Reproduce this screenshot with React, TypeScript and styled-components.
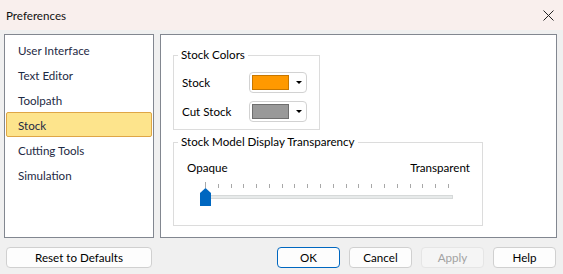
import React from "react";
import styled, { createGlobalStyle, css } from "styled-components";

const GlobalStyle = createGlobalStyle`
  html, body { margin: 0; padding: 0; }
  body {
    background: #f0f0f0;
    font-family: Lato, "Noto Sans", sans-serif;
    font-size: 11.6px;
    color: #000;
  }
  * { box-sizing: border-box; }
`;

const Window = styled.div`
  width: 563px;
  height: 274px;
  display: flex;
  flex-direction: column;
  background: #f0f0f0;
  overflow: hidden;
`;

const TitleBar = styled.div`
  height: 30px;
  flex: none;
  display: flex;
  align-items: center;
  justify-content: space-between;
  padding: 0 9px 0 6px;
  background: #f9efed;
  color: #111;
`;

const CloseButton = styled.div`
  width: 12px;
  height: 12px;
  display: flex;
  align-items: center;
  justify-content: center;
`;

const Content = styled.div`
  display: flex;
  gap: 6px;
  margin: 4px 6px 0 4px;
  height: 204px;
`;

const ListPanel = styled.div`
  width: 150px;
  flex: none;
  background: #fff;
  border: 1px solid #828790;
  padding: 2px 1px 0 1px;
  display: flex;
  flex-direction: column;
`;

const ListItem = styled.div<{ $selected?: boolean }>`
  height: 25px;
  display: flex;
  align-items: center;
  padding: 1px 0 0 11px;
  color: #1e2a44;
  border: 1px solid transparent;
  border-radius: 2px;
  ${(p) =>
    p.$selected &&
    css`
      background: #fde48c;
      border-color: #dfa646;
    `}
`;

const SettingsPanel = styled.div`
  flex: 1;
  background: #fff;
  border: 1px solid #828790;
  padding: 11px 12px 0 12px;
  display: flex;
  flex-direction: column;
  align-items: flex-start;
`;

const Group = styled.fieldset<{ $width: number; $gap?: number }>`
  width: ${(p) => p.$width}px;
  margin: ${(p) => p.$gap ?? 0}px 0 0 0;
  border: 1px solid #dcdcdc;
  padding: 0;
  min-width: 0;
`;

const Legend = styled.legend`
  padding: 0 3px;
  margin-left: 4px;
  line-height: 18px;
  color: #000;
`;

const ColorsBody = styled.div`
  padding: 8px 12px 7px 8px;
  display: flex;
  flex-direction: column;
  gap: 8px;
`;

const ColorRow = styled.div`
  display: flex;
  align-items: center;
  height: 21px;
`;

const RowLabel = styled.div`
  width: 67px;
  flex: none;
`;

const Combo = styled.div`
  width: 58px;
  height: 21px;
  border: 1px solid #d2d2d2;
  border-radius: 4px;
  background: #fff;
  display: flex;
  align-items: center;
  padding-left: 2px;
`;

const Swatch = styled.div<{ $fill: string; $edge: string }>`
  width: 37px;
  height: 15px;
  background: ${(p) => p.$fill};
  border: 1px solid ${(p) => p.$edge};
`;

const Arrow = styled.div`
  margin-left: 7px;
  width: 0;
  height: 0;
  border-left: 3px solid transparent;
  border-right: 3px solid transparent;
  border-top: 3px solid #000;
`;

const TransparencyBody = styled.div`
  padding: 9px 12px 19px 13px;
  display: flex;
  flex-direction: column;
`;

const EndLabels = styled.div`
  display: flex;
  justify-content: space-between;
  line-height: 16px;
`;

const Slider = styled.div`
  position: relative;
  margin: 4px 0 0 13px;
  width: 253px;
  height: 26px;
`;

const Ticks = styled.div`
  position: absolute;
  left: 5px;
  top: 2px;
  width: 244px;
  display: flex;
  justify-content: space-between;
  align-items: flex-end;
`;

const Tick = styled.div<{ $first?: boolean }>`
  width: 1px;
  height: ${(p) => (p.$first ? 6 : 4)}px;
  background: #a8a8a8;
`;

const Track = styled.div`
  position: absolute;
  left: 1px;
  right: 0;
  top: 15px;
  height: 4px;
  background: #e7eaea;
  border: 1px solid #d6d9d9;
`;

const Thumb = styled.div`
  position: absolute;
  left: 0;
  top: 8px;
  width: 11px;
  height: 18px;
  background: #0067c0;
  clip-path: polygon(50% 0, 100% 5px, 100% 100%, 0 100%, 0 5px);
`;

const Footer = styled.div`
  display: flex;
  justify-content: space-between;
  padding: 9px 7px 0 6px;
`;

const ButtonGroup = styled.div`
  display: flex;
  gap: 9px;
`;

const Button = styled.div<{ $width?: number; $default?: boolean; $disabled?: boolean }>`
  width: ${(p) => p.$width ?? 63}px;
  height: 21px;
  display: flex;
  align-items: center;
  justify-content: center;
  background: #fdfdfd;
  border: 1px solid #d0d0d0;
  border-radius: 4px;
  color: #000;
  ${(p) =>
    p.$default &&
    css`
      border-color: #0067c0;
    `}
  ${(p) =>
    p.$disabled &&
    css`
      background: #f5f5f5;
      border-color: #e5e5e5;
      color: #a2a2a2;
    `}
`;

const items = ["User Interface", "Text Editor", "Toolpath", "Stock", "Cutting Tools", "Simulation"];

export default function App() {
  return (
    <>
      <GlobalStyle />
      <Window>
        <TitleBar>
          <span>Preferences</span>
          <CloseButton>
            <svg width="11" height="11" viewBox="0 0 11 11">
              <path d="M0.5 0.5 L10.5 10.5 M10.5 0.5 L0.5 10.5" stroke="#222" strokeWidth="1" fill="none" />
            </svg>
          </CloseButton>
        </TitleBar>
        <Content>
          <ListPanel>
            {items.map((it) => (
              <ListItem key={it} $selected={it === "Stock"}>
                {it}
              </ListItem>
            ))}
          </ListPanel>
          <SettingsPanel>
            <Group $width={147}>
              <Legend>Stock Colors</Legend>
              <ColorsBody>
                <ColorRow>
                  <RowLabel>Stock</RowLabel>
                  <Combo>
                    <Swatch $fill="#ff9900" $edge="#c77700" />
                    <Arrow />
                  </Combo>
                </ColorRow>
                <ColorRow>
                  <RowLabel>Cut Stock</RowLabel>
                  <Combo>
                    <Swatch $fill="#999999" $edge="#6e6e6e" />
                    <Arrow />
                  </Combo>
                </ColorRow>
              </ColorsBody>
            </Group>
            <Group $width={310} $gap={3}>
              <Legend>Stock Model Display Transparency</Legend>
              <TransparencyBody>
                <EndLabels>
                  <span>Opaque</span>
                  <span>Transparent</span>
                </EndLabels>
                <Slider>
                  <Ticks>
                    {Array.from({ length: 20 }).map((_, i) => (
                      <Tick key={i} $first={i === 0} />
                    ))}
                  </Ticks>
                  <Track />
                  <Thumb />
                </Slider>
              </TransparencyBody>
            </Group>
          </SettingsPanel>
        </Content>
        <Footer>
          <Button $width={146}>Reset to Defaults</Button>
          <ButtonGroup>
            <Button $default>OK</Button>
            <Button>Cancel</Button>
            <Button $disabled>Apply</Button>
            <Button>Help</Button>
          </ButtonGroup>
        </Footer>
      </Window>
    </>
  );
}
